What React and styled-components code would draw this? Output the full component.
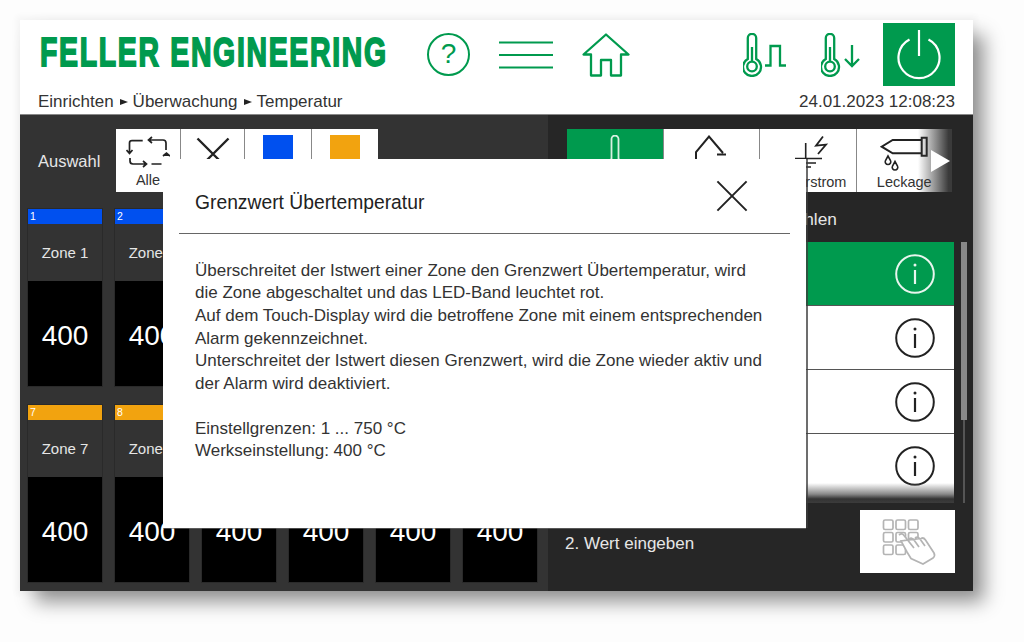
import React from 'react'
import styled, { createGlobalStyle } from 'styled-components'

const GREEN = '#009a4e'
const BLUE = '#0050ef'
const ORANGE = '#f2a30f'

const GlobalStyle = createGlobalStyle`
  html, body {
    margin: 0;
    padding: 0;
    background: #fdfdfd;
    font-family: "Liberation Sans", Arial, sans-serif;
    overflow: hidden;
  }
  * { box-sizing: border-box; }
`

function QuestionIcon() {
  return (
    <HelpCircle>?</HelpCircle>
  )
}

function MenuIcon() {
  return (
    <svg width="54" height="28" viewBox="0 0 54 28" fill="none" stroke={GREEN} strokeWidth="2.2">
      <path d="M0 1.5H54M0 14H54M0 26.5H54" />
    </svg>
  )
}

function HomeIcon() {
  return (
    <svg width="48" height="44" viewBox="581 33 48 44" fill="none" stroke={GREEN} strokeWidth="2.3" strokeLinejoin="round">
      <path d="M582.5 54.5 L605 34.5 L627.5 54.5 H620 V75.5 H610 V60 H600 V75.5 H590 V54.5 Z" />
    </svg>
  )
}

function Thermo({ children, width }) {
  return (
    <svg width={width} height="44" viewBox={`0 0 ${width} 44`} fill="none" stroke={GREEN} strokeWidth="2.3">
      <path d="M4.8 26 V5 A4.2 4.2 0 0 1 13.2 5 V26 A9 9 0 1 1 4.8 26 Z" />
      <circle cx="9" cy="33.5" r="4.8" />
      <path d="M9 14 V28" />
      {children}
    </svg>
  )
}

function PowerIcon() {
  return (
    <svg width="46" height="50" viewBox="0 0 46 50" fill="none" stroke="#fff" strokeWidth="2.2">
      <path d="M13.5 9.5 A20.5 20.5 0 1 0 32.5 9.5" />
      <path d="M23 0 V26" />
    </svg>
  )
}

function SwapIcon() {
  return (
    <svg width="44" height="34" viewBox="126 135 44 34" fill="none" stroke="#222" strokeWidth="1.7">
      <path d="M142.7 140.7 H132 Q129.5 140.7 129.5 143 V153 M126.5 150 L129.5 153.5 L132.5 150" />
      <path d="M149 140 H163 Q166 140 166 143 V150 M152 137 L148.5 140 L152 143" />
      <path d="M163 156 L166.5 153 L170 156" fill="#222" />
      <path d="M130 158 V161 Q130 164 133 164 H146 M143 161 L146.5 164 L143 167 M151.5 164 H161.5" />
    </svg>
  )
}

function CrossIcon({ size = 34, weight = 2.4 }) {
  return (
    <svg width={size} height={size} viewBox="0 0 34 34" fill="none" stroke="#222" strokeWidth={weight}>
      <path d="M1.5 1.5 L32.5 32.5 M32.5 1.5 L1.5 32.5" />
    </svg>
  )
}

function TempTabIcon() {
  return (
    <svg width="24" height="44" viewBox="0 0 24 44" fill="none" stroke="#d8f0e2" strokeWidth="1.8">
      <path d="M8.5 24 V4 A3.5 3.5 0 0 1 15.5 4 V24 A8 8 0 1 1 8.5 24 Z" />
    </svg>
  )
}

function SensorIcon() {
  return (
    <svg width="32" height="24" viewBox="696 136 32 24" fill="none" stroke="#222" strokeWidth="2">
      <path d="M697 160 V153 L710 137.5 L724 154 M718 155.5 H727" />
    </svg>
  )
}

function CurrentIcon() {
  return (
    <CurrentSvg width="36" height="36" viewBox="794 136 36 36" fill="none" stroke="#222" strokeWidth="1.6">
      <path d="M805.7 144 V159 M795 159.5 H822 M800 164 H816 M803 168 H811" />
      <path d="M823 137.5 L816 146.7 L826 145.7 L818 155" strokeWidth="1.8" />
    </CurrentSvg>
  )
}

function LeakIcon() {
  return (
    <svg width="50" height="36" viewBox="879 135 50 36" fill="none" stroke="#222" strokeWidth="2">
      <path d="M921.7 140 H892.7 L881.7 146.7 L892.7 153.3 H921.7 M921.7 137.7 H926.7 V155.7 H921.7 Z" />
      <path d="M888 156 L885.5 160.5 A2.8 2.8 0 1 0 890.5 160.5 Z" strokeWidth="1.6" />
      <path d="M895 161.5 L892.5 166 A2.8 2.8 0 1 0 897.5 166 Z" strokeWidth="1.6" />
    </svg>
  )
}

function InfoIcon() {
  return (
    <svg width="40" height="40" viewBox="0 0 40 40" fill="none" stroke="currentColor" strokeWidth="2">
      <circle cx="20" cy="20" r="18.8" />
      <circle cx="20" cy="11" r="1.5" fill="currentColor" stroke="none" />
      <path d="M20 16 V30" strokeWidth="2.2" />
    </svg>
  )
}

function KeypadIcon() {
  const cols = [883.5, 896, 908.5]
  const rows = [520, 532.5, 545]
  return (
    <KeypadSvg width="56" height="48" viewBox="882 518 56 48" fill="none" stroke="#b4b4b4" strokeWidth="1.7">
      {rows.map((y) =>
        cols.map((x) => <rect key={`${x}-${y}`} x={x} y={y} width="9.5" height="9.5" rx="1.6" />)
      )}
      <path d="M899 535 Q902 532.5 904 535.5 L914 548 M909 539 Q912 537 914 540 L919 547 M915 538 Q918 536 920 539 L925 546 M921 538.5 Q923.5 537 925.5 540 L934 553 Q935.5 556 933 558 L923 564 L911 558.5 L907 552 L901 541 Z" fill="#fff" />
    </KeypadSvg>
  )
}

const zones = [1, 2, 3, 4, 5, 6, 7, 8, 9, 10, 11, 12]

const sideTabs = [
  { icon: <TempTabIcon />, active: true },
  { icon: <SensorIcon /> },
  { icon: <CurrentIcon />, label: 'Fehlerstrom' },
  { icon: <LeakIcon />, label: 'Leckage' },
]

function App() {
  return (
    <>
      <GlobalStyle />
      <Page>
        <Screen>
          <Header>
            <TopRow>
              <LogoBox><Logo>FELLER ENGINEERING</Logo></LogoBox>
              <NavIcons>
                <QuestionIcon />
                <MenuIcon />
                <HomeIcon />
              </NavIcons>
              <StatusIcons>
                <Thermo width="44">
                  <path d="M22 32.5 H27.5 V13 H37 V32.5 H43" />
                </Thermo>
                <Thermo width="42">
                  <path d="M31 12 V33 M24 26 L31 33 L38 26" />
                </Thermo>
                <PowerButton><PowerIcon /></PowerButton>
              </StatusIcons>
            </TopRow>
            <InfoRow>
              <Crumbs>
                Einrichten<CrumbArrow />Überwachung<CrumbArrow />Temperatur
              </Crumbs>
              <span>24.01.2023 12:08:23</span>
            </InfoRow>
          </Header>

          <Body>
            <LeftPanel>
              <Toolbar>
                <ToolbarLabel>Auswahl</ToolbarLabel>
                <SelectTabs>
                  <SelectTab $w={64}>
                    <SwapIcon />
                    <TabText>Alle</TabText>
                  </SelectTab>
                  <SelectTab $w={63}><CrossSlot><CrossIcon /></CrossSlot></SelectTab>
                  <SelectTab $w={66}><Swatch $color={BLUE} /></SelectTab>
                  <SelectTab $w={66}><Swatch $color={ORANGE} /></SelectTab>
                </SelectTabs>
              </Toolbar>
              <ZoneGrid>
                {zones.map((n) => (
                  <ZoneCard key={n}>
                    <ZoneBar $color={n < 7 ? BLUE : ORANGE}>{n}</ZoneBar>
                    <ZoneName>Zone {n}</ZoneName>
                    <ZoneValue>400</ZoneValue>
                  </ZoneCard>
                ))}
              </ZoneGrid>
            </LeftPanel>

            <RightPanel>
              <SideTabs>
                {sideTabs.map((t, i) => (
                  <SideTab key={i} $active={t.active}>
                    {t.icon}
                    {t.label && <TabText>{t.label}</TabText>}
                  </SideTab>
                ))}
                <ScrollHint><HintArrow /></ScrollHint>
              </SideTabs>
              <StepLabel>1. Zu ändernden Parameter wählen</StepLabel>
              <ListArea>
                <List>
                  <ListRow $active><InfoIcon /></ListRow>
                  <ListRow><InfoIcon /></ListRow>
                  <ListRow><InfoIcon /></ListRow>
                  <ListRow><InfoIcon /></ListRow>
                  <ListFade />
                </List>
                <ScrollTrack><ScrollThumb /></ScrollTrack>
              </ListArea>
              <InputRow>
                <StepText>2. Wert eingeben</StepText>
                <KeypadButton><KeypadIcon /></KeypadButton>
              </InputRow>
            </RightPanel>
          </Body>

          <Modal>
            <ModalHead>
              <ModalTitle>Grenzwert Übertemperatur</ModalTitle>
              <CloseButton><CrossIcon size={32} weight={2.1} /></CloseButton>
            </ModalHead>
            <ModalText>
              <p>
                Überschreitet der Istwert einer Zone den Grenzwert Übertemperatur, wird<br />
                die Zone abgeschaltet und das LED-Band leuchtet rot.<br />
                Auf dem Touch-Display wird die betroffene Zone mit einem entsprechenden<br />
                Alarm gekennzeichnet.<br />
                Unterschreitet der Istwert diesen Grenzwert, wird die Zone wieder aktiv und<br />
                der Alarm wird deaktiviert.
              </p>
              <p>
                Einstellgrenzen: 1 ... 750 °C<br />
                Werkseinstellung: 400 °C
              </p>
            </ModalText>
          </Modal>
        </Screen>
      </Page>
    </>
  )
}

export default App

const CurrentSvg = styled.svg`
  margin-left: 9px;
  flex: none;
`

const KeypadSvg = styled.svg`
  margin-left: 5px;
`

const Page = styled.div`
  width: 1024px;
  height: 642px;
  padding: 20px 0 0 20px;
  overflow: hidden;
`

const Screen = styled.div`
  position: relative;
  width: 953px;
  height: 571px;
  display: flex;
  flex-direction: column;
  background: #fff;
  box-shadow: 13px 13px 18px -2px rgba(0, 0, 0, 0.42), 0 0 6px 4px rgba(0, 0, 0, 0.03);
`

const Header = styled.header`
  height: 95px;
  flex: none;
  background: #fff;
  border-bottom: 1px solid #888;
`

const TopRow = styled.div`
  height: 66px;
  padding: 3px 18px 0 20px;
  display: flex;
  align-items: center;
`

const LogoBox = styled.div`
  width: 348px;
  flex: none;
  margin-top: -5px;
`

const Logo = styled.div`
  font-family: "Liberation Sans", Arial, sans-serif;
  font-size: 40px;
  line-height: 42px;
  font-weight: 700;
  letter-spacing: 2.4px;
  color: ${GREEN};
  -webkit-text-stroke: 1.8px ${GREEN};
  white-space: nowrap;
  transform: scaleX(0.71);
  transform-origin: left center;
`

const NavIcons = styled.div`
  margin-left: 39px;
  display: flex;
  align-items: center;
  gap: 29px;
`

const HelpCircle = styled.div`
  width: 43px;
  height: 43px;
  border: 2.2px solid ${GREEN};
  border-radius: 50%;
  color: ${GREEN};
  font-size: 28px;
  line-height: 38px;
  text-align: center;
`

const StatusIcons = styled.div`
  margin-left: auto;
  display: flex;
  align-items: center;
  gap: 34px;
`

const PowerButton = styled.div`
  width: 72px;
  height: 63px;
  margin-left: -14px;
  background: ${GREEN};
  display: flex;
  align-items: center;
  justify-content: center;
`

const InfoRow = styled.div`
  height: 28px;
  padding: 3px 18px 0 18px;
  display: flex;
  align-items: center;
  justify-content: space-between;
  font-size: 17px;
  color: #333;
`

const Crumbs = styled.div`
  display: flex;
  align-items: center;
`

const CrumbArrow = styled.i`
  width: 0;
  height: 0;
  margin: 0 5px 0 6px;
  border-left: 8px solid #222;
  border-top: 3.5px solid transparent;
  border-bottom: 3.5px solid transparent;
`

const Body = styled.div`
  flex: 1;
  display: flex;
  min-height: 0;
`

const LeftPanel = styled.section`
  width: 528px;
  flex: none;
  padding: 14px 0 0 7px;
  background: #333;
`

const Toolbar = styled.div`
  height: 63px;
  margin-bottom: 16px;
  padding-left: 11px;
  display: flex;
  align-items: center;
`

const ToolbarLabel = styled.div`
  width: 78px;
  flex: none;
  padding-top: 2px;
  font-size: 16.5px;
  color: #e6e6e6;
`

const SelectTabs = styled.div`
  display: flex;
  gap: 1px;
  background: #888;
  height: 63px;
`

const SelectTab = styled.div`
  width: ${(p) => p.$w}px;
  height: 63px;
  padding-top: 6px;
  background: #fff;
  display: flex;
  flex-direction: column;
  align-items: center;
  overflow: hidden;
`

const TabText = styled.div`
  margin-top: 3px;
  font-size: 14.5px;
  line-height: 17px;
  color: #333;
  white-space: nowrap;
`

const CrossSlot = styled.div`
  margin-top: 2px;
`

const Swatch = styled.div`
  width: 30px;
  height: 30px;
  background: ${(p) => p.$color};
`

const ZoneGrid = styled.div`
  display: grid;
  grid-template-columns: repeat(6, 76px);
  column-gap: 11px;
  row-gap: 17px;
`

const ZoneCard = styled.div`
  height: 179px;
  border: 1px solid #2a2a2a;
  display: flex;
  flex-direction: column;
`

const ZoneBar = styled.div`
  height: 15px;
  padding: 1px 0 0 2px;
  background: ${(p) => p.$color};
  color: #fff;
  font-size: 10.5px;
  line-height: 12px;
`

const ZoneName = styled.div`
  height: 57px;
  display: flex;
  align-items: center;
  justify-content: center;
  font-size: 15px;
  color: #e6e6e6;
`

const ZoneValue = styled.div`
  flex: 1;
  padding-top: 4px;
  background: #000;
  color: #fff;
  font-size: 28px;
  display: flex;
  align-items: center;
  justify-content: center;
`

const RightPanel = styled.section`
  flex: 1;
  padding: 14px 0 0 17px;
  background: #262626;
  display: flex;
  flex-direction: column;
`

const SideTabs = styled.div`
  position: relative;
  width: 385px;
  height: 63px;
  margin-left: 2px;
  flex: none;
  display: grid;
  grid-template-columns: repeat(4, 1fr);
  gap: 1px;
  background: #888;
`

const SideTab = styled.div`
  padding-top: 6px;
  background: ${(p) => (p.$active ? GREEN : '#fff')};
  display: flex;
  flex-direction: column;
  align-items: center;
  overflow: hidden;
`

const ScrollHint = styled.div`
  position: absolute;
  top: 0;
  right: 0;
  bottom: 0;
  width: 34px;
  background: linear-gradient(to right, rgba(38, 38, 38, 0), #3a3a3a 90%);
  display: flex;
  align-items: center;
  justify-content: flex-end;
`

const HintArrow = styled.i`
  width: 0;
  height: 0;
  margin: 0 2px 0 0;
  border-left: 19px solid #fff;
  border-top: 11px solid transparent;
  border-bottom: 11px solid transparent;
`

const StepLabel = styled.div`
  height: 50px;
  padding-top: 5px;
  display: flex;
  align-items: center;
  font-size: 17.3px;
  color: #e6e6e6;
  white-space: nowrap;
`

const ListArea = styled.div`
  height: 261px;
  flex: none;
  display: flex;
`

const List = styled.div`
  position: relative;
  width: 389px;
  height: 261px;
  overflow: hidden;
`

const ListRow = styled.div`
  height: 64px;
  padding-right: 19px;
  background: ${(p) => (p.$active ? GREEN : '#fff')};
  color: ${(p) => (p.$active ? '#e8f5ee' : '#222')};
  border-bottom: 1px solid #555;
  display: flex;
  align-items: center;
  justify-content: flex-end;
`

const ListFade = styled.div`
  position: absolute;
  left: 0;
  right: 0;
  bottom: 0;
  height: 20px;
  background: linear-gradient(to bottom, rgba(255, 255, 255, 0), #8a8a8a 55%, #333 80%, #3c3c3c);
`

const ScrollTrack = styled.div`
  width: 6px;
  margin-left: 7px;
  position: relative;
  background: linear-gradient(to right, transparent 2px, #555 2px, #555 4px, transparent 4px);
`

const ScrollThumb = styled.div`
  height: 178px;
  background: #888;
`

const InputRow = styled.div`
  flex: 1;
  width: 390px;
  padding: 7px 0 18px;
  display: flex;
  align-items: center;
  justify-content: space-between;
`

const StepText = styled.div`
  padding-top: 4px;
  font-size: 17px;
  color: #e6e6e6;
`

const KeypadButton = styled.div`
  width: 95px;
  height: 63px;
  background: #fff;
  display: flex;
  align-items: center;
  justify-content: center;
`

const Modal = styled.div`
  position: absolute;
  left: 143px;
  top: 139px;
  width: 643px;
  height: 369px;
  padding: 0 16px;
  background: #fff;
  box-shadow: 2px 0 0 rgba(60, 60, 60, 0.75), 0 1px 0 rgba(120, 120, 120, 0.6);
`

const ModalHead = styled.div`
  height: 75px;
  padding: 0 42px 0 16px;
  border-bottom: 1px solid #666;
  display: flex;
  align-items: center;
  justify-content: space-between;
`

const ModalTitle = styled.div`
  padding-top: 14px;
  font-size: 19.3px;
  color: #222;
`

const CloseButton = styled.div`
  width: 32px;
  height: 32px;
`

const ModalText = styled.div`
  padding: 25.5px 16px 0;
  font-size: 17px;
  line-height: 22.7px;
  color: #333;

  p {
    margin: 0 0 21.8px;
    white-space: nowrap;
  }
`
